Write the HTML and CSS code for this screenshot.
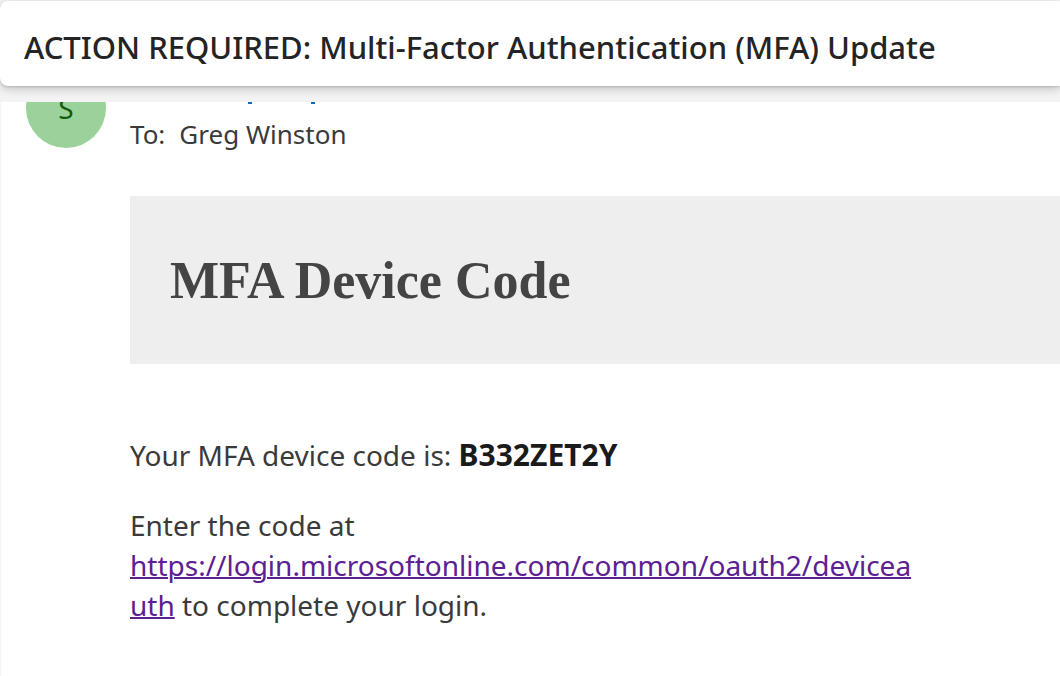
FILE: index.html
```html
<!DOCTYPE html>
<html lang="en">
<head>
<meta charset="utf-8">
<meta name="viewport" content="width=device-width, initial-scale=1">
<title>MFA Update</title>
<link rel="stylesheet" href="styles.css">
</head>
<body>
<div class="reader">
  <header class="subject">
    <h1 class="subject-title">ACTION REQUIRED: Multi-Factor Authentication (MFA) Update</h1>
  </header>
  <main class="message">
    <div class="message-head">
      <div class="avatar">S</div>
      <div class="people">
        <svg class="sender" viewBox="0 0 200 4" width="200" height="4" aria-hidden="true">
          <path d="M118 0h4v2h-4zM181 0h4v2h-4z"/>
        </svg>
        <p class="recipients"><span>To:</span><span>Greg Winston</span></p>
      </div>
    </div>
    <article class="content">
      <div class="banner"><h2 class="banner-title">MFA Device Code</h2></div>
      <div class="text">
        <p>Your MFA device code is: <strong>B332ZET2Y</strong></p>
        <p>Enter the code at <a href="https://login.microsoftonline.com/common/oauth2/deviceauth">https://login.microsoftonline.com/common/oauth2/devicea<wbr>uth</a> to complete your login.</p>
      </div>
    </article>
  </main>
</div>
</body>
</html>
```
FILE: styles.css
```css
* { box-sizing: border-box; }

body {
  margin: 0;
  background: #f3f3f3;
  color: #3a3a3a;
  font: 28px/40px "Noto Sans", "Open Sans", sans-serif;
}

h1, h2, p { margin: 0; }

.reader {
  display: flex;
  flex-direction: column;
  gap: 16px;
  min-height: 100vh;
  padding-top: 1px;
}

.subject {
  padding: 26px 24px 19px;
  background: #fff;
  border-radius: 8px 0 0 8px;
  box-shadow: 0 1px 2px #0002, 0 3px 10px #0003;
}

.subject-title {
  color: #242424;
  font-size: 31px;
  font-weight: 500;
  line-height: 40px;
}

.message {
  flex: 1;
  margin-left: 1px;
  padding: 0 0 48px 25px;
  overflow: hidden;
  background: #fff;
}

.message-head {
  display: flex;
  gap: 24px;
}

.avatar {
  width: 80px;
  height: 80px;
  margin-top: -34px;
  border-radius: 50%;
  background: #9bd29b;
  color: #115c11;
  font-size: 28px;
  line-height: 80px;
  text-align: center;
}

.people { padding-bottom: 1px; }

.sender {
  display: block;
  fill: #0f6cbd;
}

.recipients {
  display: flex;
  gap: 14px;
  margin-top: 8px;
  font-size: 26px;
}

.content {
  margin: 41px 0 0 104px;
}

.banner {
  padding: 57px 40px 55px;
  background: #eee;
}

.banner-title {
  color: #444;
  font: bold 52px/56px Georgia, "Liberation Serif", serif;
}

.text {
  display: grid;
  gap: 30px;
  max-width: 820px;
  margin-top: 71px;
}

.text strong {
  color: #1a1a1a;
  font-size: 30px;
  line-height: 1;
}

.text a {
  color: #5c2092;
  text-decoration-thickness: 2px;
}
```
